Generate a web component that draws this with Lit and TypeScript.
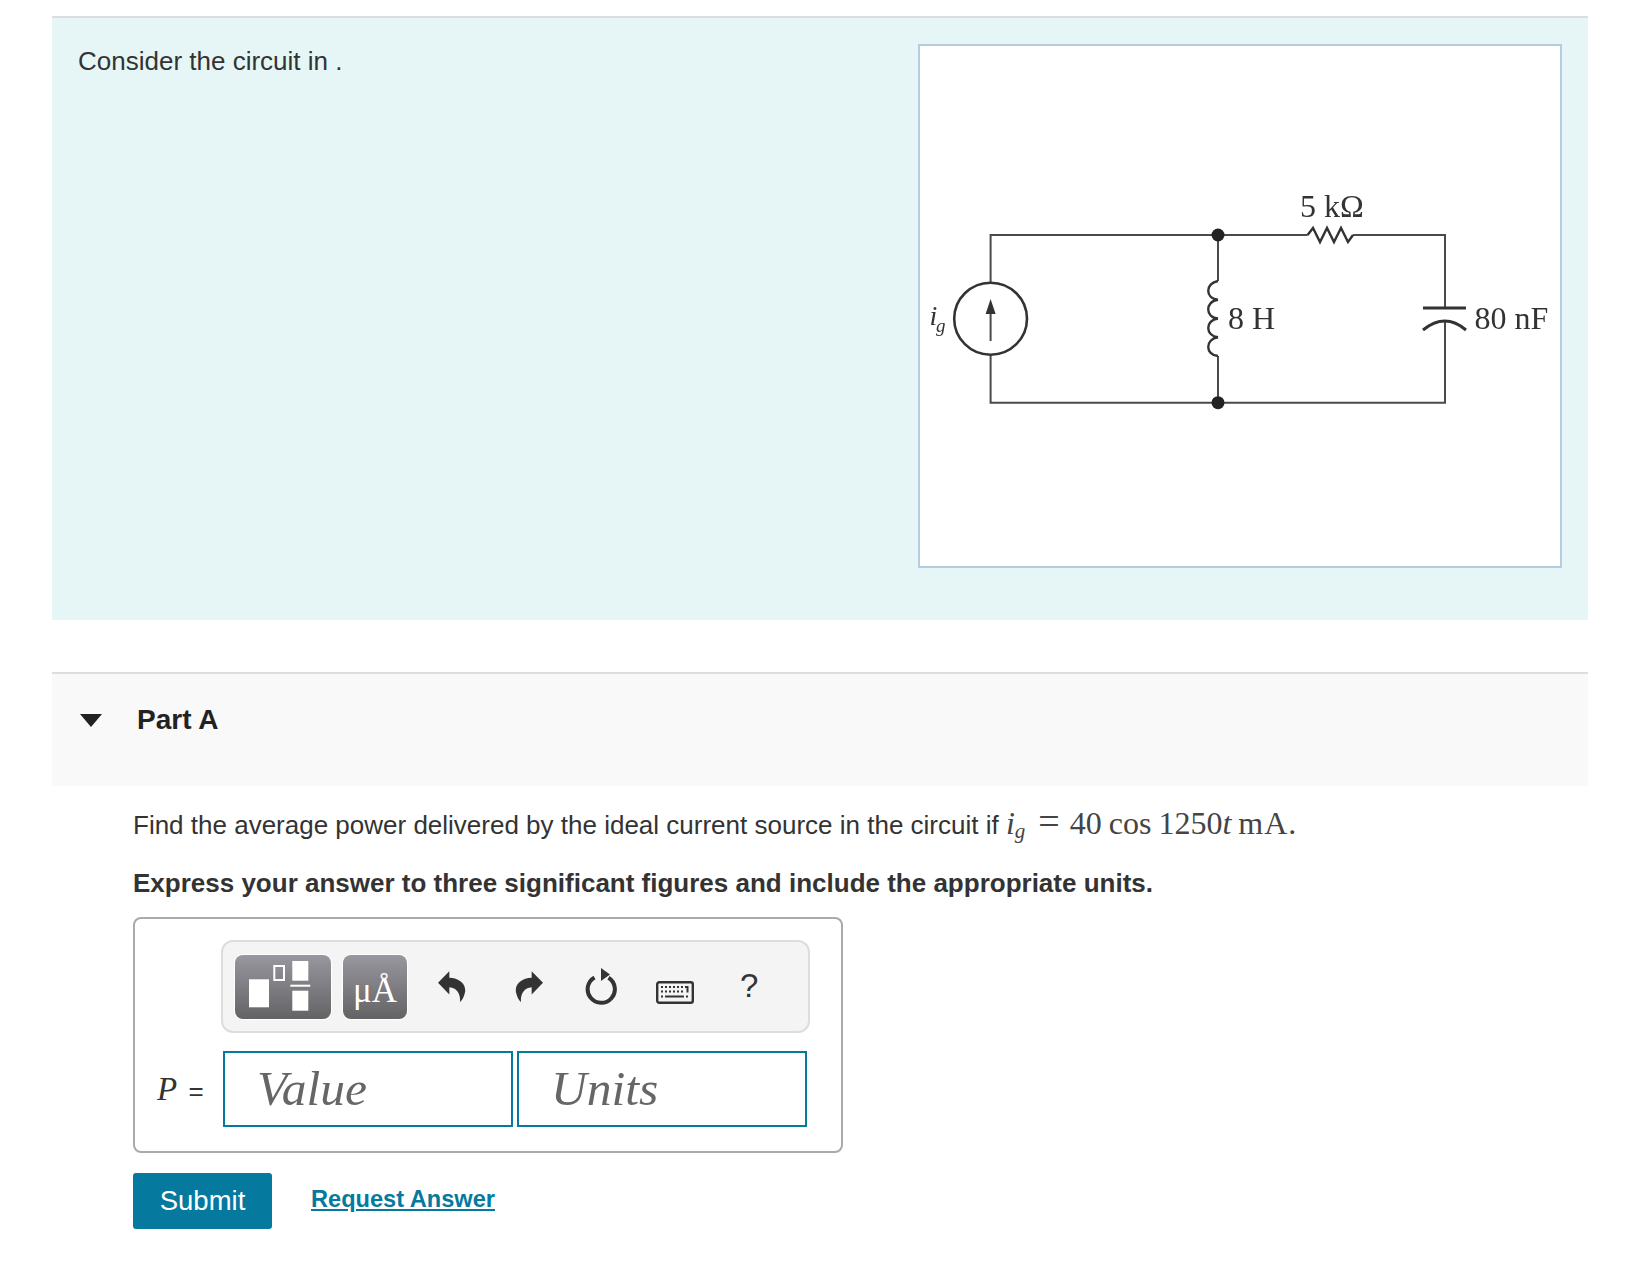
import { LitElement, html, css, svg } from "lit";
import { customElement } from "lit/decorators.js";

const circuit = svg`
  <g fill="none" stroke="#4a4a4a" stroke-width="2">
    <path d="M990.6 281.7V234H1307.6M1353 234H1445V307M1445 320V401.7H990.6V353.7"/>
    <ellipse cx="990.6" cy="317.7" rx="36.4" ry="36" stroke="#333" stroke-width="2.6"/>
    <path d="M990.6 340V310"/>
    <path d="M1218 234V280M1218 355V401.7"/>
    <path d="M1218 280C1205 282 1205 298 1218 298.7C1205 300 1205 317 1218 317.5C1205 319 1205 335 1218 336.2C1205 338 1205 354 1218 355" stroke="#333" stroke-width="2.4"/>
    <path d="M1307.6 234L1313 227L1320 241L1327 227L1334 241L1341 227L1348 241L1353 234" stroke="#333" stroke-width="2.4"/>
    <path d="M1423 307H1466" stroke="#333" stroke-width="3"/>
    <path d="M1423 329Q1445 311 1466 329" stroke="#333" stroke-width="3"/>
  </g>
  <path d="M990.6 298L995.6 313H985.6Z" fill="#333"/>
  <circle cx="1218" cy="234" r="6.5" fill="#222"/>
  <circle cx="1218" cy="401.7" r="6.5" fill="#222"/>
  <g font-family="'Liberation Serif', serif" fill="#333">
    <text x="1300" y="216" font-size="32">5 kΩ</text>
    <text x="1228" y="328" font-size="32">8 H</text>
    <text x="1474.6" y="328" font-size="32">80 nF</text>
    <text x="929.5" y="324" font-size="28" font-style="italic">i</text>
    <text x="936" y="331" font-size="19" font-style="italic">g</text>
  </g>
`;

@customElement("app-root")
export class AppRoot extends LitElement {
  static styles = css`
    :host {
      display: block;
      box-sizing: border-box;
      height: 1275px;
      padding: 16px 52px 0;
      background: #fff;
      color: #333;
      font-family: "Liberation Sans", Arial, sans-serif;
      font-size: 26px;
    }
    * { box-sizing: border-box; }
    .intro {
      height: 604px;
      border-top: 2px solid #ddd;
      background: #e6f6f6;
      padding: 26px 26px 0 26px;
      display: flex;
      justify-content: space-between;
      align-items: flex-start;
    }
    .intro p { margin: 0; line-height: 34px; }
    .figure {
      width: 644px;
      height: 524px;
      background: #fff;
      border: 2px solid #b6cde0;
    }
    .figure svg { display: block; filter: blur(0.6px); }
    .part-head {
      margin-top: 52px;
      height: 114px;
      border-top: 2px solid #ddd;
      background: #f9f9f9;
      padding: 28px 0 0 28px;
      display: flex;
      align-items: flex-start;
    }
    .caret {
      width: 0;
      height: 0;
      margin-top: 12px;
      border-left: 11px solid transparent;
      border-right: 11px solid transparent;
      border-top: 13px solid #222;
    }
    .part-head h2 {
      margin: 0 0 0 35px;
      font-size: 28px;
      line-height: 36px;
      font-weight: 700;
      color: #222;
    }
    .body { padding-left: 81px; }
    .prompt {
      margin: 19px 0 0;
      height: 36px;
      line-height: 36px;
      white-space: nowrap;
    }
    .math { font-family: "Liberation Serif", serif; font-size: 32px; color: #444; }
    .mi { font-style: italic; }
    .sub { font-size: 21px; font-style: italic; position: relative; top: 4px; margin-right: 13px; }
    .eq { font-size: 38px; line-height: 20px; margin-right: 10px; }
    .fn { margin: 0 7px; }
    .unit { margin-left: 7px; letter-spacing: 1px; }
    .instr {
      margin: 26px 0 0;
      height: 32px;
      line-height: 32px;
      font-weight: 700;
      white-space: nowrap;
    }
    .answer {
      margin-top: 18px;
      width: 710px;
      height: 236px;
      border: 2px solid #aaa;
      border-radius: 8px;
      padding: 21px 0 0;
    }
    .toolbar {
      margin-left: 86px;
      width: 589px;
      height: 93px;
      border: 2px solid #ddd;
      border-radius: 12px;
      background: #f4f4f4;
      padding: 0 0 0 12px;
      display: flex;
      align-items: center;
    }
    .tbtn {
      height: 64px;
      border-radius: 8px;
      background: linear-gradient(#99979f, #636365);
      box-shadow: 0 0 0 1px #fff;
      flex: none;
    }
    .tbtn svg { display: block; }
    .templates { width: 96px; }
    .symbols {
      width: 64px;
      margin-left: 12px;
      color: #fff;
      font-family: "Liberation Serif", serif;
      font-size: 35px;
      line-height: 64px;
      text-align: center;
      padding-top: 4px;
    }
    .ic { flex: none; display: block; color: #333; }
    .undo { margin-left: 31px; }
    .redo { margin-left: 49px; }
    .reload { margin-left: 42px; }
    .kbd { margin-left: 37px; margin-top: 11px; }
    .help {
      margin-left: 46px;
      font-size: 33px;
      line-height: 40px;
      color: #333;
      margin-top: -2px;
    }
    .row {
      margin-top: 18px;
      display: flex;
      align-items: center;
    }
    .label {
      width: 88px;
      padding-left: 22px;
      font-size: 26px;
      white-space: nowrap;
    }
    .label i { font-family: "Liberation Serif", serif; font-size: 33px; margin-right: 4px; }
    .field {
      display: block;
      width: 290px;
      height: 76px;
      border: 2px solid #057a9e;
      border-radius: 0;
      background: #fff;
      padding: 0 0 2px 32px;
      font-family: "Liberation Serif", serif;
      font-style: italic;
      font-size: 49.5px;
      color: #666;
      outline: none;
    }
    .field::placeholder { color: #666; opacity: 1; }
    .field + .field { margin-left: 4px; }
    .actions {
      margin-top: 20px;
      display: flex;
      align-items: center;
    }
    .submit {
      width: 139px;
      height: 56px;
      border: 0;
      border-radius: 3px;
      background: #057a9e;
      color: #fff;
      font-family: inherit;
      font-size: 27.5px;
      padding: 0;
    }
    .link {
      margin: -3px 0 0 39px;
      color: #057a9e;
      font-size: 23.6px;
      font-weight: 700;
      text-decoration: underline;
    }
  `;

  render() {
    return html`
      <section class="intro">
        <p>Consider the circuit in .</p>
        <div class="figure">
          <svg width="640" height="520" viewBox="920 45 640 520" role="img" aria-label="Circuit diagram">${circuit}</svg>
        </div>
      </section>

      <header class="part-head">
        <span class="caret"></span>
        <h2>Part A</h2>
      </header>

      <div class="body">
        <p class="prompt">Find the average power delivered by the ideal current source in the circuit if <span class="math"><span class="mi">i</span><span class="sub">g</span><span class="eq">=</span>40<span class="fn">cos</span>1250<span class="mi">t</span><span class="unit">mA.</span></span></p>
        <p class="instr">Express your answer to three significant figures and include the appropriate units.</p>

        <div class="answer">
          <div class="toolbar">
            <div class="tbtn templates">
              <svg width="96" height="64" viewBox="0 0 96 64" fill="#fff">
                <rect x="14" y="24.3" width="20" height="28"/>
                <rect x="39.3" y="11" width="9.7" height="14" fill="none" stroke="#fff" stroke-width="2"/>
                <rect x="57.3" y="6" width="16" height="19.7"/>
                <rect x="55.3" y="29.7" width="20" height="2"/>
                <rect x="57.3" y="35.7" width="16" height="20"/>
              </svg>
            </div>
            <div class="tbtn symbols">μÅ</div>
            <svg class="ic undo" width="28" height="32" viewBox="24 65 84 95" fill="currentColor">
              <path d="M24 100L58 65V85C90 85 112 108 104 132C102 143 96 152 90 158C92 135 82 115 58 113V135Z"/>
            </svg>
            <svg class="ic redo" width="28" height="32" viewBox="24 65 84 95" fill="currentColor">
              <path transform="matrix(-1 0 0 1 132 0)" d="M24 100L58 65V85C90 85 112 108 104 132C102 143 96 152 90 158C92 135 82 115 58 113V135Z"/>
            </svg>
            <svg class="ic reload" width="34" height="37" viewBox="0 0 34 37" fill="none">
              <path d="M23.5 9.7A13.6 13.6 0 1 1 9.5 9.4" stroke="currentColor" stroke-width="4"/>
              <path d="M16 0L25 6.5L16 13Z" fill="currentColor"/>
            </svg>
            <svg class="ic kbd" width="38" height="23" viewBox="0 0 38 23">
              <rect x="1.2" y="1.2" width="35.6" height="20.6" rx="2" fill="none" stroke="currentColor" stroke-width="2.4"/>
              <path d="M5 5h2v2H5zM9 5h2v2H9zM13 5h2v2h-2zM17 5h2v2h-2zM21 5h2v2h-2zM25 5h2v2h-2zM29 5h2v2h-2zM5 9.500h2v2H5zM9 9.500h2v2H9zM13 9.500h2v2h-2zM17 9.500h2v2h-2zM21 9.500h2v2h-2zM25 9.500h2v2h-2zM30.500 5h2v6.500h-2zM5 14.500h2v2H5zM9 14.500h19v2H9zM30 14.500h2v2h-2z" fill="currentColor"/>
            </svg>
            <span class="help">?</span>
          </div>

          <div class="row">
            <div class="label"><i>P</i> =</div>
            <input class="field" placeholder="Value" />
            <input class="field" placeholder="Units" />
          </div>
        </div>

        <div class="actions">
          <button class="submit">Submit</button>
          <a class="link" href="#">Request Answer</a>
        </div>
      </div>
    `;
  }
}
